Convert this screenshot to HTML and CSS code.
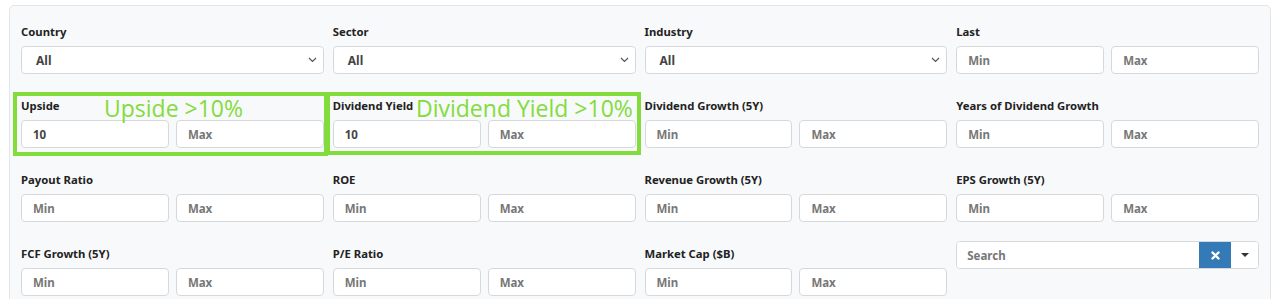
FILE: index.html
```html
<!DOCTYPE html>
<html lang="en">
<head>
  <meta charset="UTF-8">
  <meta name="viewport" content="width=device-width, initial-scale=1">
  <title>Screener Filters</title>
  <link rel="stylesheet" href="styles.css">
</head>
<body>

<div class="filter-panel">
  <div class="filter-grid">
    <div class="field">
      <label>Country</label>
      <div class="select"><span>All</span><svg width="9" height="6" viewBox="0 0 9 6"><path d="M1 1l3.5 3.5L8 1" fill="none" stroke="#555" stroke-width="1.2"/></svg></div>
    </div>
    <div class="field">
      <label>Sector</label>
      <div class="select"><span>All</span><svg width="9" height="6" viewBox="0 0 9 6"><path d="M1 1l3.5 3.5L8 1" fill="none" stroke="#555" stroke-width="1.2"/></svg></div>
    </div>
    <div class="field">
      <label>Industry</label>
      <div class="select"><span>All</span><svg width="9" height="6" viewBox="0 0 9 6"><path d="M1 1l3.5 3.5L8 1" fill="none" stroke="#555" stroke-width="1.2"/></svg></div>
    </div>
    <div class="field">
      <label>Last</label>
      <div class="range"><input placeholder="Min"><input placeholder="Max"></div>
    </div>

    <div class="field">
      <label>Upside</label>
      <div class="range"><input value="10"><input placeholder="Max"></div>
    </div>
    <div class="field">
      <label>Dividend Yield</label>
      <div class="range"><input value="10"><input placeholder="Max"></div>
    </div>
    <div class="field">
      <label>Dividend Growth (5Y)</label>
      <div class="range"><input placeholder="Min"><input placeholder="Max"></div>
    </div>
    <div class="field">
      <label>Years of Dividend Growth</label>
      <div class="range"><input placeholder="Min"><input placeholder="Max"></div>
    </div>

    <div class="field">
      <label>Payout Ratio</label>
      <div class="range"><input placeholder="Min"><input placeholder="Max"></div>
    </div>
    <div class="field">
      <label>ROE</label>
      <div class="range"><input placeholder="Min"><input placeholder="Max"></div>
    </div>
    <div class="field">
      <label>Revenue Growth (5Y)</label>
      <div class="range"><input placeholder="Min"><input placeholder="Max"></div>
    </div>
    <div class="field">
      <label>EPS Growth (5Y)</label>
      <div class="range"><input placeholder="Min"><input placeholder="Max"></div>
    </div>

    <div class="field">
      <label>FCF Growth (5Y)</label>
      <div class="range"><input placeholder="Min"><input placeholder="Max"></div>
    </div>
    <div class="field">
      <label>P/E Ratio</label>
      <div class="range"><input placeholder="Min"><input placeholder="Max"></div>
    </div>
    <div class="field">
      <label>Market Cap ($B)</label>
      <div class="range"><input placeholder="Min"><input placeholder="Max"></div>
    </div>
    <div class="field search-field">
      <div class="search-group">
        <input placeholder="Search">
        <button class="clear-btn"><svg width="9" height="9" viewBox="0 0 9 9"><path d="M1.5 1.5l6 6M7.5 1.5l-6 6" stroke="#fff" stroke-width="2.4" stroke-linecap="round"/></svg></button>
        <button class="caret-btn"><svg width="8" height="4" viewBox="0 0 8 4"><path d="M0 0h8L4 4z" fill="#333"/></svg></button>
      </div>
    </div>
  </div>

  <!-- highlight annotations -->
  <div class="mark mark-upside"></div>
  <div class="mark mark-yield"></div>
  <span class="note note-upside">Upside &gt;10%</span>
  <span class="note note-yield">Dividend Yield &gt;10%</span>
</div>

</body>
</html>
```

FILE: styles.css
```css
body {
  margin: 0;
  padding: 0;
  background-color: #fff;
  font-family: "Noto Sans", "Open Sans", sans-serif;
  color: #212529;
}

.filter-panel {
  position: relative;
  margin: 5px 9px 0;
  height: 300px;
  padding: 16px 11px 0 11px;
  background-color: #f8f9fa;
  border: 1px solid #e3e5e8;
  border-radius: 5px;
  box-sizing: border-box;
}

.filter-grid {
  display: grid;
  grid-template-columns: repeat(4, 1fr);
  column-gap: 9px;
  row-gap: 22px;
}

.field label {
  display: block;
  height: 17px;
  padding-top: 1px;
  line-height: 18px;
  margin-bottom: 6px;
  font-size: 11.3px;
  font-weight: 700;
  color: #222;
}

.select {
  display: flex;
  justify-content: space-between;
  align-items: center;
  height: 28px;
  padding: 0 6px 0 14px;
  background-color: #fff;
  border: 1px solid #d6d9dc;
  border-radius: 4px;
  box-sizing: border-box;
  font-size: 12px;
  font-weight: 700;
  color: #444;
}

.range {
  display: flex;
  gap: 7px;
}

input {
  width: 100%;
  min-width: 0;
  height: 28px;
  padding: 0 11px;
  background-color: #fff;
  border: 1px solid #d6d9dc;
  border-radius: 4px;
  box-sizing: border-box;
  font-family: inherit;
  font-size: 11.5px;
  font-weight: 700;
  color: #444;
}

input::placeholder {
  color: #777;
}

.search-field {
  margin-top: -3px;
}

.search-group {
  display: flex;
  height: 28px;
  background-color: #fff;
  border: 1px solid #d6d9dc;
  border-radius: 4px;
  box-sizing: border-box;
  overflow: hidden;
}

.search-group input {
  flex: 1;
  height: 26px;
  border: none;
  border-radius: 0;
  padding-left: 10px;
}

.clear-btn, .caret-btn {
  display: flex;
  align-items: center;
  justify-content: center;
  padding: 0;
  border: none;
  height: 26px;
}

.clear-btn {
  width: 32px;
  background-color: #337ab7;
}

.caret-btn {
  width: 27px;
  background-color: #fff;
}

.mark {
  position: absolute;
  top: 86px;
  width: 315px;
  height: 64px;
  border: 4px solid #82dc3c;
  box-sizing: border-box;
}

.mark-upside {
  left: 3px;
}

.mark-yield {
  left: 316px;
  height: 63px;
}

.note {
  position: absolute;
  top: 88px;
  font-family: "Open Sans", sans-serif;
  font-size: 23px;
  line-height: 28px;
  color: #82dc3c;
}

.note-upside {
  left: 94px;
}

.note-yield {
  left: 406px;
}
```
